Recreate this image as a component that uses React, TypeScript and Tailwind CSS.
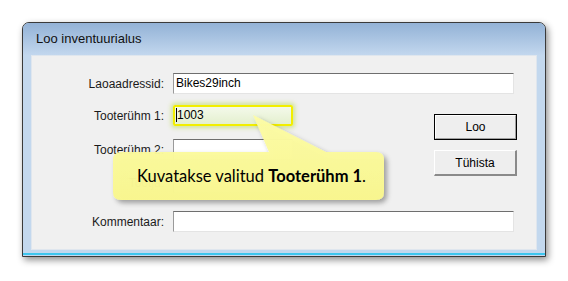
import React from 'react';

const sysFont = { fontFamily: '"Liberation Sans", Arial, sans-serif' };

function Field({ width, value, highlight }: { width: number; value?: string; highlight?: boolean }) {
  if (highlight) {
    return (
      <div className="ml-[9px] h-[21px] w-[120px] rounded-[2px] border-2 border-[#f2ee00] bg-gradient-to-b from-[#f4f9ea] to-[#e4f0cf] px-[1px] text-[12px] leading-[17px] text-black shadow-[0_0_4px_2px_rgba(190,220,90,0.6)]">
        <span className="border-l border-black">{value}</span>
      </div>
    );
  }
  return (
    <div
      className="ml-[9px] h-[21px] border-t border-l border-t-[#6e6e6e] border-l-[#9a9a9a] border-r border-b border-r-[#e4e4e4] border-b-[#e4e4e4] bg-white pl-[2px] text-[12px] leading-[19px] text-black"
      style={{ width }}
    >
      {value}
    </div>
  );
}

function Row({ label, children, className = '' }: { label: string; children: React.ReactNode; className?: string }) {
  return (
    <div className={`flex h-[21px] items-center ${className}`}>
      <div className="w-[132px] text-right text-[12px] text-[#1a1a1a]">{label}</div>
      {children}
    </div>
  );
}

export default function App() {
  return (
    <div className="relative h-[281px] w-[568px] overflow-hidden bg-white pl-[22px] pt-[22px]" style={sysFont}>
      {/* Dialog window */}
      <div className="flex h-[235px] w-[524px] flex-col overflow-hidden rounded-t-[7px] border border-[#3a3a3a] bg-[#c3d8ee] shadow-[2px_3px_7px_rgba(0,0,0,0.45)]">
        <div className="flex h-[32px] items-center bg-gradient-to-b from-[#93b2d6] to-[#c2d7ee] pl-[13px] text-[13px] text-[#111]">
          Loo inventuurialus
        </div>
        <div className="px-[8px]">
          <div className="h-[195px] border border-[#dfe6ee] bg-[#f0f0f0] pt-[17px]">
            <Row label="Laoaadressid:">
              <Field width={341} value="Bikes29inch" />
            </Row>

            <div className="mt-[11px] flex">
              <div className="flex w-[261px] flex-col">
                <Row label="Tooterühm 1:">
                  <Field width={120} value="1003" highlight />
                </Row>
                <Row label="Tooterühm 2:" className="mt-[13px]">
                  <Field width={120} />
                </Row>
                <Row label="Tootja:" className="mt-[12px]">
                  <Field width={120} />
                </Row>
              </div>
              <div className="ml-[141px] mt-[9px] flex flex-col gap-[10px]">
                <div className="border border-black">
                  <div className="flex h-[24px] w-[81px] items-center justify-center border-t border-l border-white border-r border-b border-r-[#a0a0a0] border-b-[#a0a0a0] bg-[#eeeeee] text-[12px] text-black">
                    Loo
                  </div>
                </div>
                <div className="flex h-[26px] w-[83px] items-center justify-center border-t border-l border-white border-r-2 border-b-2 border-r-[#8a8a8a] border-b-[#8a8a8a] bg-[#eeeeee] text-[12px] text-black">
                  Tühista
                </div>
              </div>
            </div>

            <Row label="Kommentaar:" className="mt-[18px]">
              <Field width={341} />
            </Row>
          </div>
        </div>
        <div className="mt-[3px] h-[2px] bg-[#3ec6ee]" />
      </div>

      {/* Callout */}
      <div className="absolute left-[105px] top-[108px] h-[100px] w-[290px]">
        <svg width="290" height="100" className="absolute inset-0">
          <defs>
            <filter id="sh" x="-10%" y="-20%" width="130%" height="150%">
              <feDropShadow dx="3" dy="3" stdDeviation="2.5" floodColor="#000" floodOpacity="0.35" />
            </filter>
            <linearGradient id="yl" x1="0" y1="0" x2="0" y2="1">
              <stop offset="0" stopColor="#fdfca6" />
              <stop offset="1" stopColor="#f9f78e" />
            </linearGradient>
          </defs>
          <path
            d="M 16 44 H 164 L 148 7 L 221 44 H 271 Q 279 44 279 52 V 84 Q 279 92 271 92 H 16 Q 8 92 8 84 V 52 Q 8 44 16 44 Z"
            fill="url(#yl)"
            fillOpacity="0.97"
            filter="url(#sh)"
          />
        </svg>
        <div
          className="absolute left-[32px] top-[58px] text-[16.5px] leading-[20px] text-black"
          style={{ fontFamily: 'Lato, "Open Sans", sans-serif' }}
        >
          Kuvatakse valitud <b>Tooterühm 1</b>.
        </div>
      </div>
    </div>
  );
}
